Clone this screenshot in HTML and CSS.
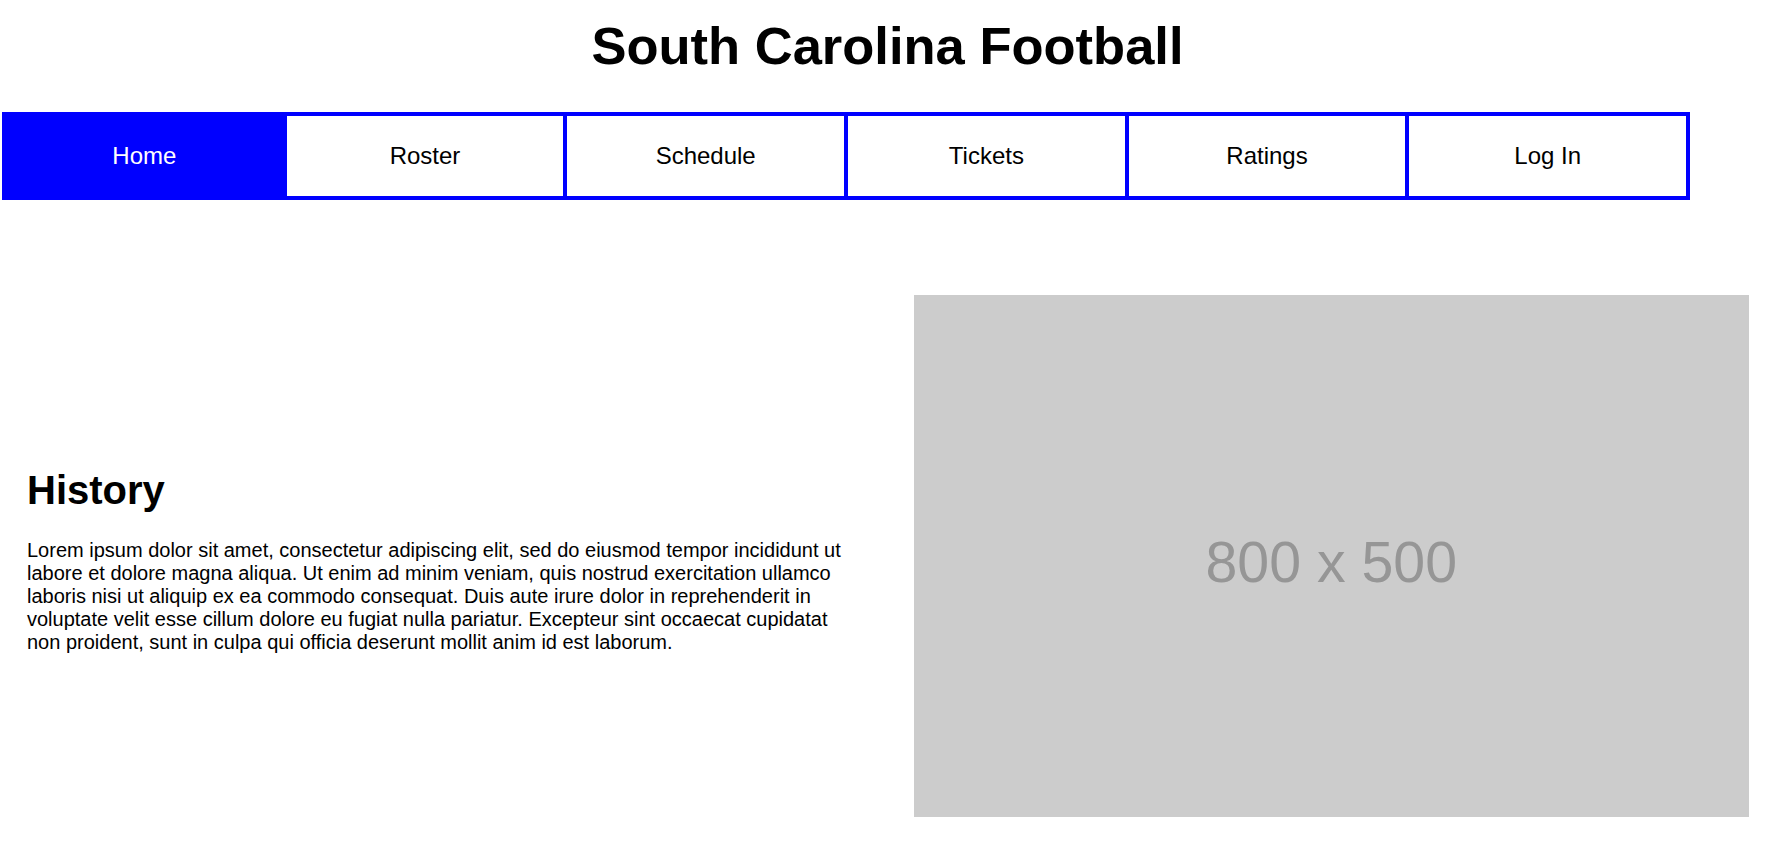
FILE: index.html
```html
<!DOCTYPE html>
<html lang="en">
<head>
<meta charset="utf-8">
<title>South Carolina Football</title>
<link rel="stylesheet" href="styles.css">
</head>
<body>
<div class="page">
  <h1 class="title">South Carolina Football</h1>
  <nav class="nav">
    <a class="nav-item active" href="#">Home</a>
    <a class="nav-item" href="#">Roster</a>
    <a class="nav-item" href="#">Schedule</a>
    <a class="nav-item" href="#">Tickets</a>
    <a class="nav-item" href="#">Ratings</a>
    <a class="nav-item" href="#">Log In</a>
  </nav>
  <main class="feature">
    <section class="feature-text">
      <h2 class="feature-heading">History</h2>
      <p class="feature-body">Lorem ipsum dolor sit amet, consectetur adipiscing elit, sed do eiusmod tempor incididunt ut labore et dolore magna aliqua. Ut enim ad minim veniam, quis nostrud exercitation ullamco laboris nisi ut aliquip ex ea commodo consequat. Duis aute irure dolor in reprehenderit in voluptate velit esse cillum dolore eu fugiat nulla pariatur. Excepteur sint occaecat cupidatat non proident, sunt in culpa qui officia deserunt mollit anim id est laborum.</p>
    </section>
    <section class="feature-media">
      <div class="placeholder"><span class="placeholder-label">800 x 500</span></div>
    </section>
  </main>
</div>
</body>
</html>
```
FILE: styles.css
```css
html, body {
  margin: 0;
  padding: 0;
  background: #ffffff;
}

body {
  font-family: "Liberation Sans", Arial, sans-serif;
  color: #000000;
}

.page {
  width: 1775px;
}

.title {
  margin: 15px 0 36px;
  font-size: 52.5px;
  font-weight: bold;
  text-align: center;
  line-height: normal;
}

.nav {
  display: flex;
  box-sizing: border-box;
  width: 1688px;
  margin-left: 2px;
  height: 88px;
  border-top: 4px solid #0000ff;
  border-bottom: 4px solid #0000ff;
  border-right: 4px solid #0000ff;
}

.nav-item {
  flex: 1 1 0;
  display: flex;
  align-items: center;
  justify-content: center;
  border-left: 4px solid #0000ff;
  font-size: 24px;
  color: #000000;
  text-decoration: none;
}

.nav-item.active {
  background: #0000ff;
  color: #ffffff;
}

.feature {
  display: flex;
  align-items: center;
  margin-top: 95px;
}

.feature-text,
.feature-media {
  box-sizing: border-box;
  width: 50%;
  padding: 0 26px;
}

.feature-text {
  padding-left: 27px;
}

.feature-heading {
  margin: 29px 0 26px;
  font-size: 40px;
  font-weight: bold;
  line-height: normal;
}

.feature-body {
  margin: 0 0 20px;
  font-size: 20px;
  line-height: 23px;
}

.placeholder {
  display: flex;
  align-items: center;
  justify-content: center;
  aspect-ratio: 800 / 500;
  background: #cccccc;
  box-sizing: border-box;
  padding-top: 12px;
}

.placeholder-label {
  font-size: 57.3px;
  color: #969696;
  line-height: normal;
}
```
